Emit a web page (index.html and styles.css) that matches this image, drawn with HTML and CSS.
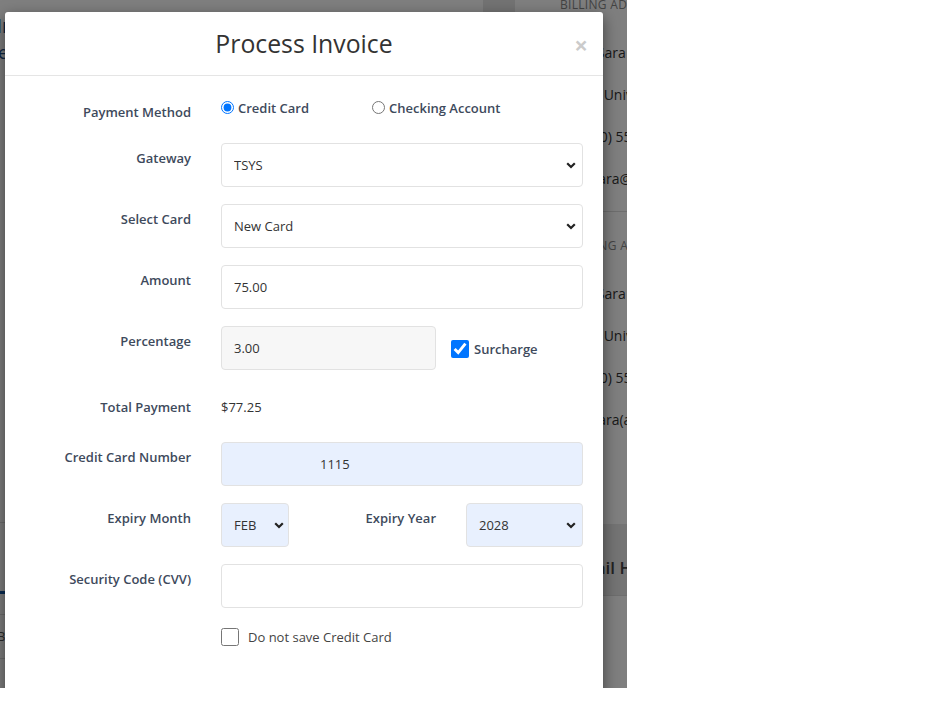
FILE: index.html
```html
<!DOCTYPE html>
<html>
<head>
<meta charset="utf-8">
<link rel="stylesheet" href="styles.css">
</head>
<body>
<div class="frame">
  <div class="page">
    <div class="main">
      <div class="main-title">Invoice #1042</div>
      <div class="main-sub">eCheck</div>
      <div class="main-tabs">
        <span class="tab">Details</span>
      </div>
      <div class="main-row thin"></div>
      <div class="main-row">Balance</div>
    </div>
    <div class="gutter"></div>
    <div class="side">
      <div class="side-head">BILLING ADDRESS</div>
      <div class="side-line">Miss. Sara Brown</div>
      <div class="side-line">45210 University Ave</div>
      <div class="side-line">+1 (800) 555-0142</div>
      <div class="side-line">mail.sara@mail.com</div>
      <div class="side-sep"></div>
      <div class="side-head">SHIPPING ADDRESS</div>
      <div class="side-line">Miss. Sara Brown</div>
      <div class="side-line">45210 University Ave</div>
      <div class="side-line">+1 (800) 555-0142</div>
      <div class="side-line">mail.sara(at)mail.com</div>
      <div class="side-band">Email History</div>
    </div>
  </div>
  <div class="backdrop"></div>
  <div class="modal">
    <div class="modal-header">
      <h4 class="modal-title">Process Invoice</h4>
      <span class="close">&times;</span>
    </div>
    <div class="modal-body">
      <div class="form">
        <label class="lbl lbl-pay">Payment Method</label>
        <div class="ctl radios">
          <label class="radio r1"><input type="radio" name="pm" checked> Credit Card</label>
          <label class="radio"><input type="radio" name="pm"> Checking Account</label>
        </div>

        <label class="lbl">Gateway</label>
        <div class="ctl sel-wrap">
          <select class="field"><option>TSYS</option></select>
          <svg class="chev" width="10" height="7" viewBox="0 0 10 7"><path d="M1.2 1.2 L5 5 L8.8 1.2" fill="none" stroke="#222" stroke-width="2.2"/></svg>
        </div>

        <label class="lbl">Select Card</label>
        <div class="ctl sel-wrap">
          <select class="field"><option>New Card</option></select>
          <svg class="chev" width="10" height="7" viewBox="0 0 10 7"><path d="M1.2 1.2 L5 5 L8.8 1.2" fill="none" stroke="#222" stroke-width="2.2"/></svg>
        </div>

        <label class="lbl">Amount</label>
        <div class="ctl"><input class="field" type="text" value="75.00"></div>

        <label class="lbl">Percentage</label>
        <div class="ctl pct-row">
          <input class="field pct" type="text" value="3.00" readonly>
          <label class="check-lbl"><input type="checkbox" class="chk" checked> Surcharge</label>
        </div>

        <label class="lbl lbl-total">Total Payment</label>
        <div class="ctl total">$77.25</div>

        <label class="lbl">Credit Card Number</label>
        <div class="ctl"><input class="field auto ccn" type="text" value="1115"></div>

        <label class="lbl">Expiry Month</label>
        <div class="ctl exp-row">
          <div class="sel-wrap month">
            <select class="field auto"><option>FEB</option></select>
            <svg class="chev" width="10" height="7" viewBox="0 0 10 7"><path d="M1.2 1.2 L5 5 L8.8 1.2" fill="none" stroke="#222" stroke-width="2.2"/></svg>
          </div>
          <label class="lbl exp-lbl">Expiry Year</label>
          <div class="sel-wrap year">
            <select class="field auto"><option>2028</option></select>
            <svg class="chev" width="10" height="7" viewBox="0 0 10 7"><path d="M1.2 1.2 L5 5 L8.8 1.2" fill="none" stroke="#222" stroke-width="2.2"/></svg>
          </div>
        </div>

        <label class="lbl">Security Code (CVV)</label>
        <div class="ctl"><input class="field" type="text" value=""></div>

        <div></div>
        <div class="ctl">
          <label class="check-lbl save"><input type="checkbox" class="chk"> Do not save Credit Card</label>
        </div>
      </div>
    </div>
  </div>
</div>
</body>
</html>
```

FILE: styles.css
```css
* { box-sizing: border-box; }
html, body { margin: 0; padding: 0; background: #fff; }
body { font-family: "Open Sans", "Liberation Sans", sans-serif; }

.frame {
  position: relative;
  width: 627px;
  height: 688px;
  overflow: hidden;
  background: #fff;
}

/* background page */
.page {
  display: flex;
  height: 100%;
  font-size: 13px;
  color: #333;
}
.main {
  flex: 0 0 483px;
  padding-top: 12px;
  overflow: hidden;
}
.main-title { height: 28px; color: #1b4f8a; font-size: 20px; font-weight: 600; margin-left: -4px; white-space: nowrap; }
.main-sub { height: 26px; color: #1b4f8a; font-size: 18px; margin-left: -2px; }
.main-tabs {
  margin-top: 456px;
  border-top: 1px solid #ddd;
  border-bottom: 3px solid #1558a6;
  height: 72px;
  padding: 24px 0 0 10px;
  color: #555;
}
.main-row { border-bottom: 1px solid #ddd; height: 44px; line-height: 43px; margin-left: -3px; color: #555; }
.main-row.thin { height: 21px; }
.gutter { flex: 0 0 32px; background: #e6e6e6; }
.side {
  flex: 0 0 112px;
  padding-left: 45px;
  margin-top: -5px;
  overflow: hidden;
}
.side-head {
  font-size: 12px;
  color: #888;
  letter-spacing: 0.3px;
  height: 20px;
  line-height: 20px;
  white-space: nowrap;
}
.side-line {
  height: 42px;
  line-height: 42px;
  font-size: 14px;
  white-space: nowrap;
  color: #333;
}
.side-head + .side-line { margin-top: 17px; }
.side-sep { border-top: 1px solid #ddd; margin: 11px -45px 24px; }
.side-band {
  margin: 83px -45px 0;
  padding: 16px 0 0 55px;
  height: 72px;
  line-height: 56px;
  background: #e9e9e9;
  font-size: 17px;
  font-weight: 600;
  color: #444;
  white-space: nowrap;
  border-bottom: 1px solid #ddd;
}

.backdrop {
  position: absolute;
  inset: 0;
  background: rgba(0, 0, 0, 0.5);
}

/* modal */
.modal {
  position: absolute;
  left: 5px;
  top: 12px;
  width: 598px;
  height: 720px;
  background: #fff;
  border-radius: 3px;
  box-shadow: 0 5px 15px rgba(0, 0, 0, 0.5);
}
.modal-header {
  position: relative;
  height: 64px;
  border-bottom: 1px solid #e5e5e5;
  display: flex;
  align-items: center;
  justify-content: center;
}
.modal-title {
  margin: 0;
  font-size: 24.8px;
  font-weight: 400;
  color: #333;
  line-height: 1.2;
  padding-top: 1px;
}
.close {
  position: absolute;
  right: 15px;
  top: 21px;
  font-size: 24px;
  font-weight: 700;
  line-height: 1;
  color: #000;
  opacity: 0.2;
}

.modal-body {
  padding: 17px 20px 0 16px;
}
.form {
  display: grid;
  grid-template-columns: 170px 362px;
  column-gap: 30px;
  row-gap: 17px;
}
.lbl {
  display: block;
  text-align: right;
  font-size: 13px;
  font-weight: 600;
  color: #3e4a5c;
  line-height: 20px;
  padding-top: 5px;
  white-space: nowrap;
}
.lbl-pay { padding-top: 9px; }
.lbl-total { padding-top: 10px; }

.ctl { position: relative; }
.radios {
  display: flex;
  height: 33px;
  padding-top: 5px;
  font-size: 13px;
  font-weight: 600;
  color: #3e4a5c;
}
.radio { display: flex; align-items: center; height: 20px; white-space: nowrap; }
.radio input { margin: 0 4px 0 0; width: 13px; height: 13px; position: relative; top: -1px; }
.r1 { width: 151px; }

.field {
  display: block;
  width: 100%;
  height: 44px;
  border: 1px solid #e2e2e2;
  border-radius: 4px;
  padding: 0 12px;
  font-family: "Open Sans", "Liberation Sans", sans-serif;
  font-size: 13px;
  color: #333;
  background: #fff;
  outline: none;
}
select.field {
  -webkit-appearance: none;
  appearance: none;
}
.sel-wrap { position: relative; }
.chev {
  position: absolute;
  right: 7px;
  top: 19px;
  pointer-events: none;
}
.auto { background: #e8f0fe; }
.ccn { padding-left: 98px; }

.pct-row { display: flex; align-items: center; }
.pct { width: 215px; background: #f7f7f7; }
.check-lbl {
  display: flex;
  align-items: center;
  font-size: 13px;
  font-weight: 600;
  color: #3e4a5c;
  white-space: nowrap;
}
.pct-row .check-lbl { margin-left: 15px; padding-top: 2px; }
.chk { width: 18px; height: 18px; margin: 0 5px 0 0; }
.save { height: 24px; font-weight: 400; color: #444; }
.save .chk { margin-right: 9px; }

.total {
  height: 38px;
  padding-top: 10px;
  line-height: 20px;
  font-size: 13px;
  color: #333;
}

.exp-row { display: flex; }
.month { width: 68px; }
.month .chev { right: 5px; }
.exp-lbl { width: 147px; }
.year { width: 117px; margin-left: 30px; }
```
